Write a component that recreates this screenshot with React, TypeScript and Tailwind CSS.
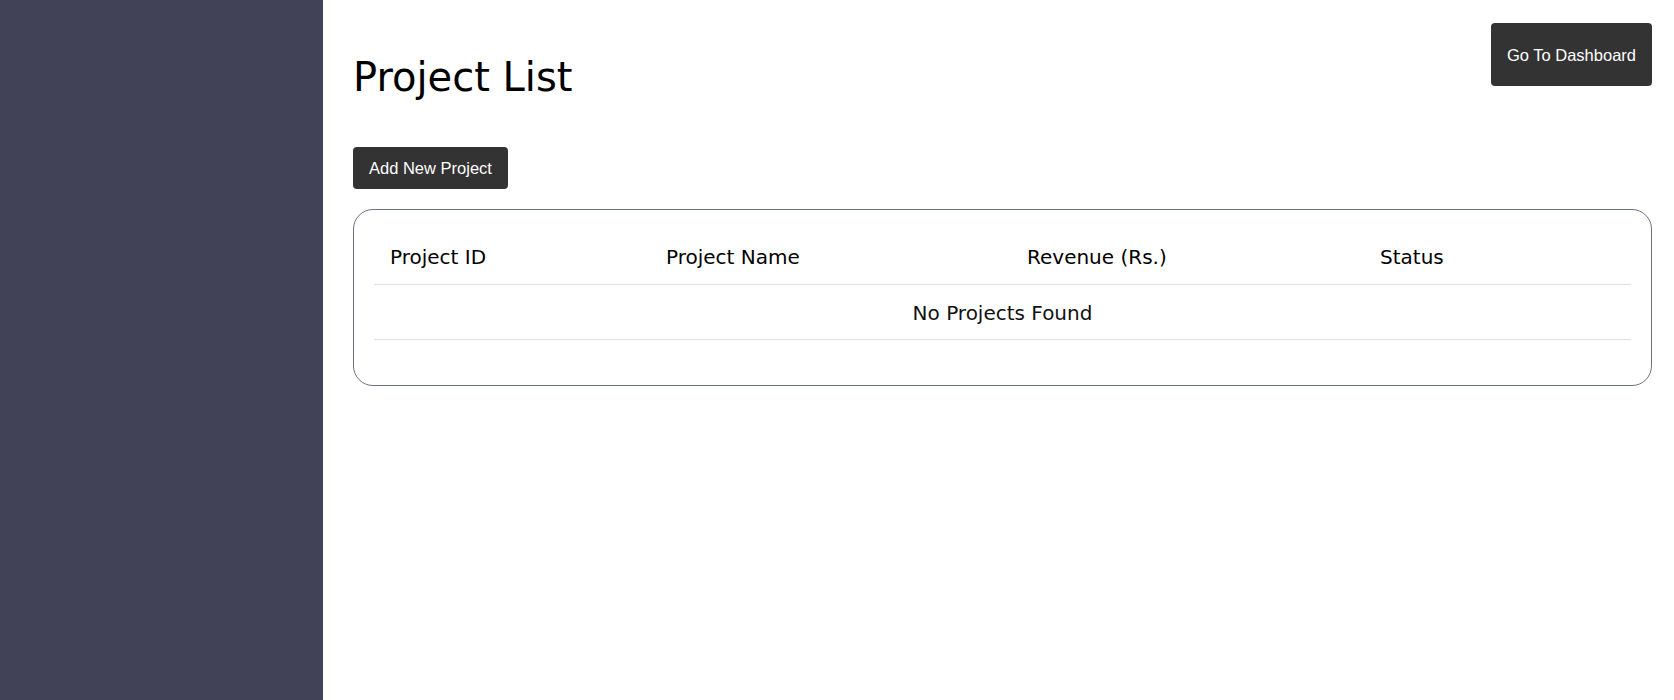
import React from "react";

const columns = ["Project ID", "Project Name", "Revenue (Rs.)", "Status"];

export default function App() {
  return (
    <div className="flex min-h-[700px] w-full bg-white">
      <aside className="w-[323px] shrink-0 bg-[#414157]" />
      <main
        className="flex-1 pl-[30px] pr-[22px] text-black"
        style={{ fontFamily: '"DejaVu Sans", "Liberation Sans", sans-serif' }}
      >
        <div className="flex items-start justify-between">
          <h1 className="mt-[53px] text-[40px] leading-[48px] font-normal">Project List</h1>
          <button
            className="mt-[23px] flex h-[63px] items-center rounded-[4px] bg-[#333333] px-4 text-[16.5px] leading-[18px] text-white"
            style={{ fontFamily: '"Liberation Sans", Arial, sans-serif' }}
          >
            Go To Dashboard
          </button>
        </div>
        <button
          className="mt-[46px] flex h-[42px] items-center rounded-[4px] bg-[#333333] px-4 text-[16.5px] leading-[18px] text-white"
          style={{ fontFamily: '"Liberation Sans", Arial, sans-serif' }}
        >
          Add New Project
        </button>
        <div className="mt-[20px] rounded-[20px] border border-[#6e6f88] px-[20px] pt-[19px] pb-[45px]">
          <div className="grid grid-cols-[276px_361px_353px_1fr] border-b border-[#dddddd]">
            {columns.map((c) => (
              <div key={c} className="px-4 pt-[16px] pb-[15px] text-[20px] leading-6 font-normal">
                {c}
              </div>
            ))}
          </div>
          <div className="flex h-[55px] items-center justify-center border-b border-[#dddddd] pt-[2px] text-[20px] leading-6 text-[#111111]">
            No Projects Found
          </div>
        </div>
      </main>
    </div>
  );
}
